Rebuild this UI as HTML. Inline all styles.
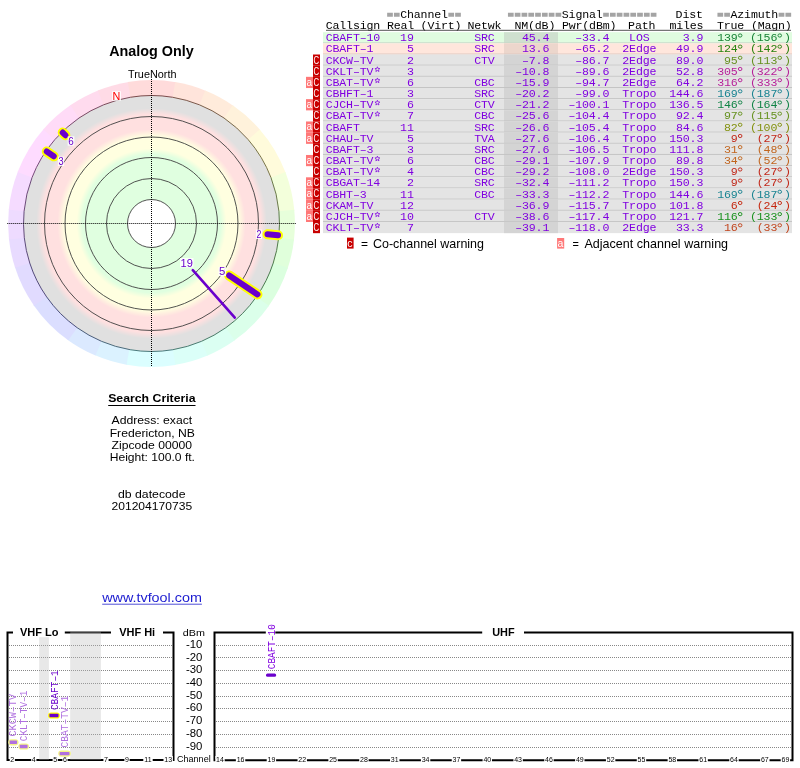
<!DOCTYPE html>
<html><head><meta charset="utf-8"><title>TV Fool</title>
<style>html,body{margin:0;padding:0;background:#fff;width:800px;height:768px;overflow:hidden}svg{display:block;will-change:transform}</style>
</head><body><svg width="800" height="768" viewBox="0 0 800 768">
<rect width="800" height="768" fill="#fff"/>
<path d="M151.5,223.5 L127.59,364.89 A143.4,143.4 0 0 1 94.55,355.11 Z" fill="#dbf2ff"/>
<path d="M151.5,223.5 L95.47,355.50 A143.4,143.4 0 0 1 67.41,339.66 Z" fill="#dbe9ff"/>
<path d="M151.5,223.5 L68.23,340.24 A143.4,143.4 0 0 1 33.46,304.93 Z" fill="#dbdeff"/>
<path d="M151.5,223.5 L34.03,305.75 A143.4,143.4 0 0 1 14.81,266.86 Z" fill="#e1dbff"/>
<path d="M151.5,223.5 L15.12,267.81 A143.4,143.4 0 0 1 8.89,238.49 Z" fill="#e8dbff"/>
<path d="M151.5,223.5 L8.99,239.48 A143.4,143.4 0 0 1 8.86,208.76 Z" fill="#eedbff"/>
<path d="M151.5,223.5 L8.76,209.76 A143.4,143.4 0 0 1 17.99,171.18 Z" fill="#f5dbff"/>
<path d="M151.5,223.5 L17.62,172.11 A143.4,143.4 0 0 1 43.93,128.67 Z" fill="#fedbff"/>
<path d="M151.5,223.5 L43.27,129.42 A143.4,143.4 0 0 1 71.10,104.76 Z" fill="#ffdbf7"/>
<path d="M151.5,223.5 L70.28,105.32 A143.4,143.4 0 0 1 98.71,90.17 Z" fill="#ffdbee"/>
<path d="M151.5,223.5 L97.78,90.54 A143.4,143.4 0 0 1 128.82,81.90 Z" fill="#ffdbe6"/>
<path d="M151.5,223.5 L127.83,82.07 A143.4,143.4 0 0 1 176.15,82.24 Z" fill="#ffdbdb"/>
<path d="M151.5,223.5 L175.17,82.07 A143.4,143.4 0 0 1 206.15,90.92 Z" fill="#ffe4db"/>
<path d="M151.5,223.5 L205.22,90.54 A143.4,143.4 0 0 1 233.55,105.89 Z" fill="#ffebdb"/>
<path d="M151.5,223.5 L232.72,105.32 A143.4,143.4 0 0 1 260.38,130.18 Z" fill="#fff2db"/>
<path d="M151.5,223.5 L259.73,129.42 A143.4,143.4 0 0 1 285.73,173.05 Z" fill="#fffbdb"/>
<path d="M151.5,223.5 L285.38,172.11 A143.4,143.4 0 0 1 294.33,210.75 Z" fill="#f3ffdb"/>
<path d="M151.5,223.5 L294.24,209.76 A143.4,143.4 0 0 1 293.89,240.48 Z" fill="#e7ffdb"/>
<path d="M151.5,223.5 L294.01,239.48 A143.4,143.4 0 0 1 287.57,268.76 Z" fill="#e0ffdb"/>
<path d="M151.5,223.5 L287.88,267.81 A143.4,143.4 0 0 1 268.39,306.57 Z" fill="#dbffdf"/>
<path d="M151.5,223.5 L268.97,305.75 A143.4,143.4 0 0 1 233.96,340.82 Z" fill="#dbffea"/>
<path d="M151.5,223.5 L234.77,340.24 A143.4,143.4 0 0 1 206.61,355.89 Z" fill="#dbfff2"/>
<path d="M151.5,223.5 L207.53,355.50 A143.4,143.4 0 0 1 174.43,365.06 Z" fill="#dbfff8"/>
<path d="M151.5,223.5 L175.41,364.89 A143.4,143.4 0 0 1 126.60,364.72 Z" fill="#dbfeff"/>
<defs><radialGradient id="rg" gradientUnits="userSpaceOnUse" cx="151.5" cy="223.5" r="128"><stop offset="0" stop-color="#e0ffe0"/><stop offset="0.54" stop-color="#e0ffe0"/><stop offset="0.585" stop-color="#ffffe0"/><stop offset="0.68" stop-color="#ffffe0"/><stop offset="0.735" stop-color="#ffe0e0"/><stop offset="0.852" stop-color="#ffe0e0"/><stop offset="0.9" stop-color="#e0e0e0"/><stop offset="1" stop-color="#e0e0e0"/></radialGradient></defs>
<circle cx="151.5" cy="223.5" r="128" fill="url(#rg)"/>
<circle cx="151.5" cy="223.5" r="24" fill="#fff"/>
<circle cx="151.5" cy="223.5" r="24" fill="none" stroke="#404040" stroke-width="0.9"/>
<circle cx="151.5" cy="223.5" r="45" fill="none" stroke="#404040" stroke-width="0.9"/>
<circle cx="151.5" cy="223.5" r="66" fill="none" stroke="#404040" stroke-width="0.9"/>
<circle cx="151.5" cy="223.5" r="86.5" fill="none" stroke="#404040" stroke-width="0.9"/>
<circle cx="151.5" cy="223.5" r="107" fill="none" stroke="#404040" stroke-width="0.9"/>
<path d="M130.15,349.71 A128,128 0 0 1 101.49,341.32" fill="none" stroke="#3a5b6d" stroke-width="0.9"/>
<path d="M101.49,341.32 A128,128 0 0 1 77.17,327.71" fill="none" stroke="#3a4e6d" stroke-width="0.9"/>
<path d="M77.17,327.71 A128,128 0 0 1 46.65,296.92" fill="none" stroke="#3a3e6d" stroke-width="0.9"/>
<path d="M46.65,296.92 A128,128 0 0 1 29.76,263.05" fill="none" stroke="#433a6d" stroke-width="0.9"/>
<path d="M29.76,263.05 A128,128 0 0 1 24.30,237.77" fill="none" stroke="#4d3a6d" stroke-width="0.9"/>
<path d="M24.30,237.77 A128,128 0 0 1 24.09,211.23" fill="none" stroke="#553a6d" stroke-width="0.9"/>
<path d="M24.09,211.23 A128,128 0 0 1 32.00,177.63" fill="none" stroke="#5f3a6d" stroke-width="0.9"/>
<path d="M32.00,177.63 A128,128 0 0 1 54.90,139.52" fill="none" stroke="#6b3a6d" stroke-width="0.9"/>
<path d="M54.90,139.52 A128,128 0 0 1 79.00,118.01" fill="none" stroke="#6d3a61" stroke-width="0.9"/>
<path d="M79.00,118.01 A128,128 0 0 1 103.55,104.82" fill="none" stroke="#6d3a55" stroke-width="0.9"/>
<path d="M103.55,104.82 A128,128 0 0 1 130.37,97.26" fill="none" stroke="#6d3a49" stroke-width="0.9"/>
<path d="M130.37,97.26 A128,128 0 0 1 172.63,97.26" fill="none" stroke="#6d3a3a" stroke-width="0.9"/>
<path d="M172.63,97.26 A128,128 0 0 1 199.45,104.82" fill="none" stroke="#6d473a" stroke-width="0.9"/>
<path d="M199.45,104.82 A128,128 0 0 1 224.00,118.01" fill="none" stroke="#6d503a" stroke-width="0.9"/>
<path d="M224.00,118.01 A128,128 0 0 1 248.10,139.52" fill="none" stroke="#6d5b3a" stroke-width="0.9"/>
<path d="M248.10,139.52 A128,128 0 0 1 271.00,177.63" fill="none" stroke="#6d683a" stroke-width="0.9"/>
<path d="M271.00,177.63 A128,128 0 0 1 278.91,211.23" fill="none" stroke="#5c6d3a" stroke-width="0.9"/>
<path d="M278.91,211.23 A128,128 0 0 1 278.70,237.77" fill="none" stroke="#4b6d3a" stroke-width="0.9"/>
<path d="M278.70,237.77 A128,128 0 0 1 273.24,263.05" fill="none" stroke="#416d3a" stroke-width="0.9"/>
<path d="M273.24,263.05 A128,128 0 0 1 256.35,296.92" fill="none" stroke="#3a6d40" stroke-width="0.9"/>
<path d="M256.35,296.92 A128,128 0 0 1 225.83,327.71" fill="none" stroke="#3a6d4f" stroke-width="0.9"/>
<path d="M225.83,327.71 A128,128 0 0 1 201.51,341.32" fill="none" stroke="#3a6d5a" stroke-width="0.9"/>
<path d="M201.51,341.32 A128,128 0 0 1 172.85,349.71" fill="none" stroke="#3a6d63" stroke-width="0.9"/>
<path d="M172.85,349.71 A128,128 0 0 1 130.15,349.71" fill="none" stroke="#3a6b6d" stroke-width="0.9"/>
<line x1="7.3" y1="223.5" x2="296" y2="223.5" stroke="#000" stroke-width="1" stroke-dasharray="1,1"/>
<line x1="151.5" y1="79" x2="151.5" y2="366.8" stroke="#000" stroke-width="1" stroke-dasharray="1,1"/>
<line x1="192.78" y1="270.16" x2="234.79" y2="317.64" stroke="#6a00cc" stroke-width="2.6" stroke-linecap="round"/>
<line x1="229.20" y1="275.51" x2="257.45" y2="294.43" stroke="#ffff00" stroke-width="10" stroke-linecap="round"/>
<line x1="229.20" y1="275.51" x2="257.45" y2="294.43" stroke="#6a00cc" stroke-width="6" stroke-linecap="round"/>
<line x1="267.50" y1="234.26" x2="278.06" y2="235.24" stroke="#ffff00" stroke-width="10" stroke-linecap="round"/>
<line x1="267.50" y1="234.26" x2="278.06" y2="235.24" stroke="#6a00cc" stroke-width="6" stroke-linecap="round"/>
<line x1="65.39" y1="135.26" x2="62.73" y2="132.54" stroke="#ffff00" stroke-width="10" stroke-linecap="round"/>
<line x1="65.39" y1="135.26" x2="62.73" y2="132.54" stroke="#6a00cc" stroke-width="6" stroke-linecap="round"/>
<line x1="53.76" y1="156.32" x2="46.75" y2="151.51" stroke="#ffff00" stroke-width="10" stroke-linecap="round"/>
<line x1="53.76" y1="156.32" x2="46.75" y2="151.51" stroke="#6a00cc" stroke-width="6" stroke-linecap="round"/>
<rect x="180.00" y="258.00" width="13.50" height="9.50" fill="#fff" opacity="0.85"/>
<text x="180.60" y="266.50" font-family="Liberation Sans" font-size="11.52" fill="#6a00cc" text-anchor="start" textLength="12.3" lengthAdjust="spacingAndGlyphs" >19</text>
<rect x="218.50" y="267.00" width="7.50" height="9.00" fill="#fff" opacity="0.85"/>
<text x="219.10" y="275.00" font-family="Liberation Sans" font-size="10.75" fill="#6a00cc" text-anchor="start" textLength="6.3" lengthAdjust="spacingAndGlyphs" >5</text>
<rect x="255.90" y="229.60" width="6.10" height="9.40" fill="#fff" opacity="0.85"/>
<text x="256.50" y="238.00" font-family="Liberation Sans" font-size="11.37" fill="#6a00cc" text-anchor="start" textLength="4.9" lengthAdjust="spacingAndGlyphs" >2</text>
<rect x="67.70" y="136.30" width="6.70" height="9.40" fill="#fff" opacity="0.85"/>
<text x="68.30" y="144.70" font-family="Liberation Sans" font-size="11.37" fill="#6a00cc" text-anchor="start" textLength="5.5" lengthAdjust="spacingAndGlyphs" >6</text>
<rect x="57.90" y="156.60" width="6.30" height="9.40" fill="#fff" opacity="0.85"/>
<text x="58.50" y="165.00" font-family="Liberation Sans" font-size="11.37" fill="#6a00cc" text-anchor="start" textLength="5.1" lengthAdjust="spacingAndGlyphs" >3</text>
<rect x="112.00" y="91.25" width="9.00" height="9.50" fill="#fff" opacity="0.85"/>
<text x="112.60" y="99.75" font-family="Liberation Sans" font-size="11.52" fill="#ff0000" text-anchor="start" textLength="7.8" lengthAdjust="spacingAndGlyphs" >N</text>
<text x="109.20" y="55.60" font-family="Liberation Sans" font-size="14" font-weight="bold" fill="#000" text-anchor="start" textLength="84.6" lengthAdjust="spacingAndGlyphs" >Analog Only</text>
<text x="128.00" y="77.75" font-family="Liberation Sans" font-size="10" fill="#000" text-anchor="start" textLength="48.5" lengthAdjust="spacingAndGlyphs" >TrueNorth</text>
<text x="108.20" y="401.90" font-family="Liberation Sans" font-size="10.8" font-weight="bold" fill="#000" text-anchor="start" textLength="87.3" lengthAdjust="spacingAndGlyphs" >Search Criteria</text>
<rect x="108.2" y="405" width="87.3" height="1" fill="#000"/>
<text x="111.50" y="423.80" font-family="Liberation Sans" font-size="10.8" fill="#000" text-anchor="start" textLength="80.7" lengthAdjust="spacingAndGlyphs" >Address: exact</text>
<text x="109.70" y="436.60" font-family="Liberation Sans" font-size="10.8" fill="#000" text-anchor="start" textLength="85.2" lengthAdjust="spacingAndGlyphs" >Fredericton, NB</text>
<text x="111.50" y="449.00" font-family="Liberation Sans" font-size="10.8" fill="#000" text-anchor="start" textLength="80.5" lengthAdjust="spacingAndGlyphs" >Zipcode 00000</text>
<text x="109.70" y="461.00" font-family="Liberation Sans" font-size="10.8" fill="#000" text-anchor="start" textLength="85.3" lengthAdjust="spacingAndGlyphs" >Height: 100.0 ft.</text>
<text x="118.00" y="497.70" font-family="Liberation Sans" font-size="10.8" fill="#000" text-anchor="start" textLength="67.5" lengthAdjust="spacingAndGlyphs" >db datecode</text>
<text x="111.50" y="509.60" font-family="Liberation Sans" font-size="10.8" fill="#000" text-anchor="start" textLength="80.6" lengthAdjust="spacingAndGlyphs" >201204170735</text>
<text x="102.20" y="602.00" font-family="Liberation Sans" font-size="12.4" fill="#1c1cd0" text-anchor="start" textLength="99.7" lengthAdjust="spacingAndGlyphs" >www.tvfool.com</text>
<rect x="102.2" y="603.7" width="99.7" height="1" fill="#5050d8"/>
<rect x="323" y="32.17" width="469" height="11.16" fill="#e0fce0"/>
<rect x="504" y="32.17" width="54" height="11.16" fill="#cfe0cf"/>
<rect x="323" y="42.33" width="469" height="1" fill="#c8d8c8"/>
<rect x="323" y="43.33" width="469" height="11.16" fill="#ffe6dc"/>
<rect x="504" y="43.33" width="54" height="11.16" fill="#ecd6cc"/>
<rect x="323" y="53.50" width="469" height="1" fill="#e0c8c0"/>
<rect x="323" y="54.50" width="469" height="11.16" fill="#e4e4e4"/>
<rect x="504" y="54.50" width="54" height="11.16" fill="#d4d4d4"/>
<rect x="323" y="64.66" width="469" height="1" fill="#c4c4c4"/>
<rect x="313" y="54.50" width="7" height="11.21" fill="#c80000"/>
<text x="313.6" y="63.50" font-family="Liberation Sans" font-size="10.2" fill="#fff" textLength="5.6" lengthAdjust="spacingAndGlyphs">C</text>
<rect x="323" y="65.66" width="469" height="11.16" fill="#e4e4e4"/>
<rect x="504" y="65.66" width="54" height="11.16" fill="#d4d4d4"/>
<rect x="323" y="75.83" width="469" height="1" fill="#c4c4c4"/>
<rect x="313" y="65.66" width="7" height="11.21" fill="#c80000"/>
<text x="313.6" y="74.66" font-family="Liberation Sans" font-size="10.2" fill="#fff" textLength="5.6" lengthAdjust="spacingAndGlyphs">C</text>
<rect x="323" y="76.83" width="469" height="11.16" fill="#e4e4e4"/>
<rect x="504" y="76.83" width="54" height="11.16" fill="#d4d4d4"/>
<rect x="323" y="86.99" width="469" height="1" fill="#c4c4c4"/>
<rect x="313" y="76.83" width="7" height="11.21" fill="#c80000"/>
<text x="313.6" y="85.83" font-family="Liberation Sans" font-size="10.2" fill="#fff" textLength="5.6" lengthAdjust="spacingAndGlyphs">C</text>
<rect x="306" y="76.83" width="7" height="11.21" fill="#ff7878"/>
<text x="306.6" y="85.83" font-family="Liberation Sans" font-size="10.5" fill="#fff" textLength="5.6" lengthAdjust="spacingAndGlyphs">a</text>
<rect x="323" y="87.99" width="469" height="11.16" fill="#e4e4e4"/>
<rect x="504" y="87.99" width="54" height="11.16" fill="#d4d4d4"/>
<rect x="323" y="98.15" width="469" height="1" fill="#c4c4c4"/>
<rect x="313" y="87.99" width="7" height="11.21" fill="#c80000"/>
<text x="313.6" y="96.99" font-family="Liberation Sans" font-size="10.2" fill="#fff" textLength="5.6" lengthAdjust="spacingAndGlyphs">C</text>
<rect x="323" y="99.15" width="469" height="11.16" fill="#e4e4e4"/>
<rect x="504" y="99.15" width="54" height="11.16" fill="#d4d4d4"/>
<rect x="323" y="109.32" width="469" height="1" fill="#c4c4c4"/>
<rect x="313" y="99.15" width="7" height="11.21" fill="#c80000"/>
<text x="313.6" y="108.15" font-family="Liberation Sans" font-size="10.2" fill="#fff" textLength="5.6" lengthAdjust="spacingAndGlyphs">C</text>
<rect x="306" y="99.15" width="7" height="11.21" fill="#ff7878"/>
<text x="306.6" y="108.15" font-family="Liberation Sans" font-size="10.5" fill="#fff" textLength="5.6" lengthAdjust="spacingAndGlyphs">a</text>
<rect x="323" y="110.32" width="469" height="11.16" fill="#e4e4e4"/>
<rect x="504" y="110.32" width="54" height="11.16" fill="#d4d4d4"/>
<rect x="323" y="120.48" width="469" height="1" fill="#c4c4c4"/>
<rect x="313" y="110.32" width="7" height="11.21" fill="#c80000"/>
<text x="313.6" y="119.32" font-family="Liberation Sans" font-size="10.2" fill="#fff" textLength="5.6" lengthAdjust="spacingAndGlyphs">C</text>
<rect x="323" y="121.48" width="469" height="11.16" fill="#e4e4e4"/>
<rect x="504" y="121.48" width="54" height="11.16" fill="#d4d4d4"/>
<rect x="323" y="131.65" width="469" height="1" fill="#c4c4c4"/>
<rect x="313" y="121.48" width="7" height="11.21" fill="#c80000"/>
<text x="313.6" y="130.48" font-family="Liberation Sans" font-size="10.2" fill="#fff" textLength="5.6" lengthAdjust="spacingAndGlyphs">C</text>
<rect x="306" y="121.48" width="7" height="11.21" fill="#ff7878"/>
<text x="306.6" y="130.48" font-family="Liberation Sans" font-size="10.5" fill="#fff" textLength="5.6" lengthAdjust="spacingAndGlyphs">a</text>
<rect x="323" y="132.65" width="469" height="11.16" fill="#e4e4e4"/>
<rect x="504" y="132.65" width="54" height="11.16" fill="#d4d4d4"/>
<rect x="323" y="142.81" width="469" height="1" fill="#c4c4c4"/>
<rect x="313" y="132.65" width="7" height="11.21" fill="#c80000"/>
<text x="313.6" y="141.65" font-family="Liberation Sans" font-size="10.2" fill="#fff" textLength="5.6" lengthAdjust="spacingAndGlyphs">C</text>
<rect x="306" y="132.65" width="7" height="11.21" fill="#ff7878"/>
<text x="306.6" y="141.65" font-family="Liberation Sans" font-size="10.5" fill="#fff" textLength="5.6" lengthAdjust="spacingAndGlyphs">a</text>
<rect x="323" y="143.81" width="469" height="11.16" fill="#e4e4e4"/>
<rect x="504" y="143.81" width="54" height="11.16" fill="#d4d4d4"/>
<rect x="323" y="153.97" width="469" height="1" fill="#c4c4c4"/>
<rect x="313" y="143.81" width="7" height="11.21" fill="#c80000"/>
<text x="313.6" y="152.81" font-family="Liberation Sans" font-size="10.2" fill="#fff" textLength="5.6" lengthAdjust="spacingAndGlyphs">C</text>
<rect x="323" y="154.97" width="469" height="11.16" fill="#e4e4e4"/>
<rect x="504" y="154.97" width="54" height="11.16" fill="#d4d4d4"/>
<rect x="323" y="165.14" width="469" height="1" fill="#c4c4c4"/>
<rect x="313" y="154.97" width="7" height="11.21" fill="#c80000"/>
<text x="313.6" y="163.97" font-family="Liberation Sans" font-size="10.2" fill="#fff" textLength="5.6" lengthAdjust="spacingAndGlyphs">C</text>
<rect x="306" y="154.97" width="7" height="11.21" fill="#ff7878"/>
<text x="306.6" y="163.97" font-family="Liberation Sans" font-size="10.5" fill="#fff" textLength="5.6" lengthAdjust="spacingAndGlyphs">a</text>
<rect x="323" y="166.14" width="469" height="11.16" fill="#e4e4e4"/>
<rect x="504" y="166.14" width="54" height="11.16" fill="#d4d4d4"/>
<rect x="323" y="176.30" width="469" height="1" fill="#c4c4c4"/>
<rect x="313" y="166.14" width="7" height="11.21" fill="#c80000"/>
<text x="313.6" y="175.14" font-family="Liberation Sans" font-size="10.2" fill="#fff" textLength="5.6" lengthAdjust="spacingAndGlyphs">C</text>
<rect x="323" y="177.30" width="469" height="11.16" fill="#e4e4e4"/>
<rect x="504" y="177.30" width="54" height="11.16" fill="#d4d4d4"/>
<rect x="323" y="187.47" width="469" height="1" fill="#c4c4c4"/>
<rect x="313" y="177.30" width="7" height="11.21" fill="#c80000"/>
<text x="313.6" y="186.30" font-family="Liberation Sans" font-size="10.2" fill="#fff" textLength="5.6" lengthAdjust="spacingAndGlyphs">C</text>
<rect x="306" y="177.30" width="7" height="11.21" fill="#ff7878"/>
<text x="306.6" y="186.30" font-family="Liberation Sans" font-size="10.5" fill="#fff" textLength="5.6" lengthAdjust="spacingAndGlyphs">a</text>
<rect x="323" y="188.47" width="469" height="11.16" fill="#e4e4e4"/>
<rect x="504" y="188.47" width="54" height="11.16" fill="#d4d4d4"/>
<rect x="323" y="198.63" width="469" height="1" fill="#c4c4c4"/>
<rect x="313" y="188.47" width="7" height="11.21" fill="#c80000"/>
<text x="313.6" y="197.47" font-family="Liberation Sans" font-size="10.2" fill="#fff" textLength="5.6" lengthAdjust="spacingAndGlyphs">C</text>
<rect x="306" y="188.47" width="7" height="11.21" fill="#ff7878"/>
<text x="306.6" y="197.47" font-family="Liberation Sans" font-size="10.5" fill="#fff" textLength="5.6" lengthAdjust="spacingAndGlyphs">a</text>
<rect x="323" y="199.63" width="469" height="11.16" fill="#e4e4e4"/>
<rect x="504" y="199.63" width="54" height="11.16" fill="#d4d4d4"/>
<rect x="323" y="209.79" width="469" height="1" fill="#c4c4c4"/>
<rect x="313" y="199.63" width="7" height="11.21" fill="#c80000"/>
<text x="313.6" y="208.63" font-family="Liberation Sans" font-size="10.2" fill="#fff" textLength="5.6" lengthAdjust="spacingAndGlyphs">C</text>
<rect x="306" y="199.63" width="7" height="11.21" fill="#ff7878"/>
<text x="306.6" y="208.63" font-family="Liberation Sans" font-size="10.5" fill="#fff" textLength="5.6" lengthAdjust="spacingAndGlyphs">a</text>
<rect x="323" y="210.79" width="469" height="11.16" fill="#e4e4e4"/>
<rect x="504" y="210.79" width="54" height="11.16" fill="#d4d4d4"/>
<rect x="323" y="220.96" width="469" height="1" fill="#c4c4c4"/>
<rect x="313" y="210.79" width="7" height="11.21" fill="#c80000"/>
<text x="313.6" y="219.79" font-family="Liberation Sans" font-size="10.2" fill="#fff" textLength="5.6" lengthAdjust="spacingAndGlyphs">C</text>
<rect x="306" y="210.79" width="7" height="11.21" fill="#ff7878"/>
<text x="306.6" y="219.79" font-family="Liberation Sans" font-size="10.5" fill="#fff" textLength="5.6" lengthAdjust="spacingAndGlyphs">a</text>
<rect x="323" y="221.96" width="469" height="11.16" fill="#e4e4e4"/>
<rect x="504" y="221.96" width="54" height="11.16" fill="#d4d4d4"/>
<rect x="313" y="221.96" width="7" height="11.21" fill="#c80000"/>
<text x="313.6" y="230.96" font-family="Liberation Sans" font-size="10.2" fill="#fff" textLength="5.6" lengthAdjust="spacingAndGlyphs">C</text>
<text x="325.70" y="41.30" font-family="Liberation Mono" font-size="11.6" letter-spacing="-0.160" fill="#8000e0" >CBAFT–10</text>
<text x="400.10" y="41.30" font-family="Liberation Mono" font-size="11.6" letter-spacing="-0.160" fill="#8000e0" >19</text>
<text x="474.20" y="41.30" font-family="Liberation Mono" font-size="11.6" letter-spacing="-0.160" fill="#8000e0" >SRC</text>
<text x="522.00" y="41.30" font-family="Liberation Mono" font-size="11.6" letter-spacing="-0.160" fill="#8000e0" >45.4</text>
<text x="575.20" y="41.30" font-family="Liberation Mono" font-size="11.6" letter-spacing="-0.160" fill="#8000e0" >–33.4</text>
<text x="629.10" y="41.30" font-family="Liberation Mono" font-size="11.6" letter-spacing="-0.160" fill="#8000e0" >LOS</text>
<text x="682.80" y="41.30" font-family="Liberation Mono" font-size="11.6" letter-spacing="-0.160" fill="#8000e0" >3.9</text>
<text x="717.20" y="41.30" font-family="Liberation Mono" font-size="11.6" letter-spacing="-0.160" fill="#198337" >139 </text>
<text x="750.00" y="41.30" font-family="Liberation Mono" font-size="11.6" letter-spacing="-0.160" fill="#198337" >(156 )</text>
<ellipse cx="740.15" cy="35.50" rx="1.8" ry="1.6" fill="none" stroke="#198337" stroke-width="0.95"/>
<ellipse cx="779.75" cy="35.50" rx="1.8" ry="1.6" fill="none" stroke="#198337" stroke-width="0.95"/>
<text x="325.70" y="52.46" font-family="Liberation Mono" font-size="11.6" letter-spacing="-0.160" fill="#8000e0" >CBAFT–1</text>
<text x="406.90" y="52.46" font-family="Liberation Mono" font-size="11.6" letter-spacing="-0.160" fill="#8000e0" >5</text>
<text x="474.20" y="52.46" font-family="Liberation Mono" font-size="11.6" letter-spacing="-0.160" fill="#8000e0" >SRC</text>
<text x="522.00" y="52.46" font-family="Liberation Mono" font-size="11.6" letter-spacing="-0.160" fill="#8000e0" >13.6</text>
<text x="575.20" y="52.46" font-family="Liberation Mono" font-size="11.6" letter-spacing="-0.160" fill="#8000e0" >–65.2</text>
<text x="622.30" y="52.46" font-family="Liberation Mono" font-size="11.6" letter-spacing="-0.160" fill="#8000e0" >2Edge</text>
<text x="676.00" y="52.46" font-family="Liberation Mono" font-size="11.6" letter-spacing="-0.160" fill="#8000e0" >49.9</text>
<text x="717.20" y="52.46" font-family="Liberation Mono" font-size="11.6" letter-spacing="-0.160" fill="#27830f" >124 </text>
<text x="750.00" y="52.46" font-family="Liberation Mono" font-size="11.6" letter-spacing="-0.160" fill="#27830f" >(142 )</text>
<ellipse cx="740.15" cy="46.66" rx="1.8" ry="1.6" fill="none" stroke="#27830f" stroke-width="0.95"/>
<ellipse cx="779.75" cy="46.66" rx="1.8" ry="1.6" fill="none" stroke="#27830f" stroke-width="0.95"/>
<text x="325.70" y="63.63" font-family="Liberation Mono" font-size="11.6" letter-spacing="-0.160" fill="#8000e0" >CKCW–TV</text>
<text x="406.90" y="63.63" font-family="Liberation Mono" font-size="11.6" letter-spacing="-0.160" fill="#8000e0" >2</text>
<text x="474.20" y="63.63" font-family="Liberation Mono" font-size="11.6" letter-spacing="-0.160" fill="#8000e0" >CTV</text>
<text x="522.00" y="63.63" font-family="Liberation Mono" font-size="11.6" letter-spacing="-0.160" fill="#8000e0" >–7.8</text>
<text x="575.20" y="63.63" font-family="Liberation Mono" font-size="11.6" letter-spacing="-0.160" fill="#8000e0" >–86.7</text>
<text x="622.30" y="63.63" font-family="Liberation Mono" font-size="11.6" letter-spacing="-0.160" fill="#8000e0" >2Edge</text>
<text x="676.00" y="63.63" font-family="Liberation Mono" font-size="11.6" letter-spacing="-0.160" fill="#8000e0" >89.0</text>
<text x="724.00" y="63.63" font-family="Liberation Mono" font-size="11.6" letter-spacing="-0.160" fill="#65911e" >95 </text>
<text x="750.00" y="63.63" font-family="Liberation Mono" font-size="11.6" letter-spacing="-0.160" fill="#65911e" >(113 )</text>
<ellipse cx="740.15" cy="57.83" rx="1.8" ry="1.6" fill="none" stroke="#65911e" stroke-width="0.95"/>
<ellipse cx="779.75" cy="57.83" rx="1.8" ry="1.6" fill="none" stroke="#65911e" stroke-width="0.95"/>
<text x="325.70" y="74.79" font-family="Liberation Mono" font-size="11.6" letter-spacing="-0.160" fill="#8000e0" >CKLT–TV </text>
<polygon points="377.40,66.79 378.08,68.46 379.87,68.59 378.49,69.75 378.93,71.50 377.40,70.54 375.87,71.50 376.31,69.75 374.93,68.59 376.72,68.46" fill="none" stroke="#8000e0" stroke-width="0.75" stroke-linejoin="round"/>
<text x="406.90" y="74.79" font-family="Liberation Mono" font-size="11.6" letter-spacing="-0.160" fill="#8000e0" >3</text>
<text x="484.40" y="74.79" font-family="Liberation Mono" font-size="11.6" letter-spacing="-0.160" fill="#8000e0" ></text>
<text x="515.20" y="74.79" font-family="Liberation Mono" font-size="11.6" letter-spacing="-0.160" fill="#8000e0" >–10.8</text>
<text x="575.20" y="74.79" font-family="Liberation Mono" font-size="11.6" letter-spacing="-0.160" fill="#8000e0" >–89.6</text>
<text x="622.30" y="74.79" font-family="Liberation Mono" font-size="11.6" letter-spacing="-0.160" fill="#8000e0" >2Edge</text>
<text x="676.00" y="74.79" font-family="Liberation Mono" font-size="11.6" letter-spacing="-0.160" fill="#8000e0" >52.8</text>
<text x="717.20" y="74.79" font-family="Liberation Mono" font-size="11.6" letter-spacing="-0.160" fill="#b61e98" >305 </text>
<text x="750.00" y="74.79" font-family="Liberation Mono" font-size="11.6" letter-spacing="-0.160" fill="#b61e98" >(322 )</text>
<ellipse cx="740.15" cy="68.99" rx="1.8" ry="1.6" fill="none" stroke="#b61e98" stroke-width="0.95"/>
<ellipse cx="779.75" cy="68.99" rx="1.8" ry="1.6" fill="none" stroke="#b61e98" stroke-width="0.95"/>
<text x="325.70" y="85.96" font-family="Liberation Mono" font-size="11.6" letter-spacing="-0.160" fill="#8000e0" >CBAT–TV </text>
<polygon points="377.40,77.96 378.08,79.63 379.87,79.75 378.49,80.91 378.93,82.66 377.40,81.71 375.87,82.66 376.31,80.91 374.93,79.75 376.72,79.63" fill="none" stroke="#8000e0" stroke-width="0.75" stroke-linejoin="round"/>
<text x="406.90" y="85.96" font-family="Liberation Mono" font-size="11.6" letter-spacing="-0.160" fill="#8000e0" >6</text>
<text x="474.20" y="85.96" font-family="Liberation Mono" font-size="11.6" letter-spacing="-0.160" fill="#8000e0" >CBC</text>
<text x="515.20" y="85.96" font-family="Liberation Mono" font-size="11.6" letter-spacing="-0.160" fill="#8000e0" >–15.9</text>
<text x="575.20" y="85.96" font-family="Liberation Mono" font-size="11.6" letter-spacing="-0.160" fill="#8000e0" >–94.7</text>
<text x="622.30" y="85.96" font-family="Liberation Mono" font-size="11.6" letter-spacing="-0.160" fill="#8000e0" >2Edge</text>
<text x="676.00" y="85.96" font-family="Liberation Mono" font-size="11.6" letter-spacing="-0.160" fill="#8000e0" >64.2</text>
<text x="717.20" y="85.96" font-family="Liberation Mono" font-size="11.6" letter-spacing="-0.160" fill="#b61e98" >316 </text>
<text x="750.00" y="85.96" font-family="Liberation Mono" font-size="11.6" letter-spacing="-0.160" fill="#b61e98" >(333 )</text>
<ellipse cx="740.15" cy="80.16" rx="1.8" ry="1.6" fill="none" stroke="#b61e98" stroke-width="0.95"/>
<ellipse cx="779.75" cy="80.16" rx="1.8" ry="1.6" fill="none" stroke="#b61e98" stroke-width="0.95"/>
<text x="325.70" y="97.12" font-family="Liberation Mono" font-size="11.6" letter-spacing="-0.160" fill="#8000e0" >CBHFT–1</text>
<text x="406.90" y="97.12" font-family="Liberation Mono" font-size="11.6" letter-spacing="-0.160" fill="#8000e0" >3</text>
<text x="474.20" y="97.12" font-family="Liberation Mono" font-size="11.6" letter-spacing="-0.160" fill="#8000e0" >SRC</text>
<text x="515.20" y="97.12" font-family="Liberation Mono" font-size="11.6" letter-spacing="-0.160" fill="#8000e0" >–20.2</text>
<text x="575.20" y="97.12" font-family="Liberation Mono" font-size="11.6" letter-spacing="-0.160" fill="#8000e0" >–99.0</text>
<text x="622.30" y="97.12" font-family="Liberation Mono" font-size="11.6" letter-spacing="-0.160" fill="#8000e0" >Tropo</text>
<text x="669.20" y="97.12" font-family="Liberation Mono" font-size="11.6" letter-spacing="-0.160" fill="#8000e0" >144.6</text>
<text x="717.20" y="97.12" font-family="Liberation Mono" font-size="11.6" letter-spacing="-0.160" fill="#198391" >169 </text>
<text x="750.00" y="97.12" font-family="Liberation Mono" font-size="11.6" letter-spacing="-0.160" fill="#198391" >(187 )</text>
<ellipse cx="740.15" cy="91.32" rx="1.8" ry="1.6" fill="none" stroke="#198391" stroke-width="0.95"/>
<ellipse cx="779.75" cy="91.32" rx="1.8" ry="1.6" fill="none" stroke="#198391" stroke-width="0.95"/>
<text x="325.70" y="108.28" font-family="Liberation Mono" font-size="11.6" letter-spacing="-0.160" fill="#8000e0" >CJCH–TV </text>
<polygon points="377.40,100.28 378.08,101.95 379.87,102.08 378.49,103.24 378.93,104.99 377.40,104.03 375.87,104.99 376.31,103.24 374.93,102.08 376.72,101.95" fill="none" stroke="#8000e0" stroke-width="0.75" stroke-linejoin="round"/>
<text x="406.90" y="108.28" font-family="Liberation Mono" font-size="11.6" letter-spacing="-0.160" fill="#8000e0" >6</text>
<text x="474.20" y="108.28" font-family="Liberation Mono" font-size="11.6" letter-spacing="-0.160" fill="#8000e0" >CTV</text>
<text x="515.20" y="108.28" font-family="Liberation Mono" font-size="11.6" letter-spacing="-0.160" fill="#8000e0" >–21.2</text>
<text x="568.40" y="108.28" font-family="Liberation Mono" font-size="11.6" letter-spacing="-0.160" fill="#8000e0" >–100.1</text>
<text x="622.30" y="108.28" font-family="Liberation Mono" font-size="11.6" letter-spacing="-0.160" fill="#8000e0" >Tropo</text>
<text x="669.20" y="108.28" font-family="Liberation Mono" font-size="11.6" letter-spacing="-0.160" fill="#8000e0" >136.5</text>
<text x="717.20" y="108.28" font-family="Liberation Mono" font-size="11.6" letter-spacing="-0.160" fill="#0f8345" >146 </text>
<text x="750.00" y="108.28" font-family="Liberation Mono" font-size="11.6" letter-spacing="-0.160" fill="#0f8345" >(164 )</text>
<ellipse cx="740.15" cy="102.48" rx="1.8" ry="1.6" fill="none" stroke="#0f8345" stroke-width="0.95"/>
<ellipse cx="779.75" cy="102.48" rx="1.8" ry="1.6" fill="none" stroke="#0f8345" stroke-width="0.95"/>
<text x="325.70" y="119.45" font-family="Liberation Mono" font-size="11.6" letter-spacing="-0.160" fill="#8000e0" >CBAT–TV </text>
<polygon points="377.40,111.45 378.08,113.12 379.87,113.24 378.49,114.40 378.93,116.15 377.40,115.20 375.87,116.15 376.31,114.40 374.93,113.24 376.72,113.12" fill="none" stroke="#8000e0" stroke-width="0.75" stroke-linejoin="round"/>
<text x="406.90" y="119.45" font-family="Liberation Mono" font-size="11.6" letter-spacing="-0.160" fill="#8000e0" >7</text>
<text x="474.20" y="119.45" font-family="Liberation Mono" font-size="11.6" letter-spacing="-0.160" fill="#8000e0" >CBC</text>
<text x="515.20" y="119.45" font-family="Liberation Mono" font-size="11.6" letter-spacing="-0.160" fill="#8000e0" >–25.6</text>
<text x="568.40" y="119.45" font-family="Liberation Mono" font-size="11.6" letter-spacing="-0.160" fill="#8000e0" >–104.4</text>
<text x="622.30" y="119.45" font-family="Liberation Mono" font-size="11.6" letter-spacing="-0.160" fill="#8000e0" >Tropo</text>
<text x="676.00" y="119.45" font-family="Liberation Mono" font-size="11.6" letter-spacing="-0.160" fill="#8000e0" >92.4</text>
<text x="724.00" y="119.45" font-family="Liberation Mono" font-size="11.6" letter-spacing="-0.160" fill="#65911e" >97 </text>
<text x="750.00" y="119.45" font-family="Liberation Mono" font-size="11.6" letter-spacing="-0.160" fill="#65911e" >(115 )</text>
<ellipse cx="740.15" cy="113.65" rx="1.8" ry="1.6" fill="none" stroke="#65911e" stroke-width="0.95"/>
<ellipse cx="779.75" cy="113.65" rx="1.8" ry="1.6" fill="none" stroke="#65911e" stroke-width="0.95"/>
<text x="325.70" y="130.61" font-family="Liberation Mono" font-size="11.6" letter-spacing="-0.160" fill="#8000e0" >CBAFT</text>
<text x="400.10" y="130.61" font-family="Liberation Mono" font-size="11.6" letter-spacing="-0.160" fill="#8000e0" >11</text>
<text x="474.20" y="130.61" font-family="Liberation Mono" font-size="11.6" letter-spacing="-0.160" fill="#8000e0" >SRC</text>
<text x="515.20" y="130.61" font-family="Liberation Mono" font-size="11.6" letter-spacing="-0.160" fill="#8000e0" >–26.6</text>
<text x="568.40" y="130.61" font-family="Liberation Mono" font-size="11.6" letter-spacing="-0.160" fill="#8000e0" >–105.4</text>
<text x="622.30" y="130.61" font-family="Liberation Mono" font-size="11.6" letter-spacing="-0.160" fill="#8000e0" >Tropo</text>
<text x="676.00" y="130.61" font-family="Liberation Mono" font-size="11.6" letter-spacing="-0.160" fill="#8000e0" >84.6</text>
<text x="724.00" y="130.61" font-family="Liberation Mono" font-size="11.6" letter-spacing="-0.160" fill="#83910f" >82 </text>
<text x="750.00" y="130.61" font-family="Liberation Mono" font-size="11.6" letter-spacing="-0.160" fill="#83910f" >(100 )</text>
<ellipse cx="740.15" cy="124.81" rx="1.8" ry="1.6" fill="none" stroke="#83910f" stroke-width="0.95"/>
<ellipse cx="779.75" cy="124.81" rx="1.8" ry="1.6" fill="none" stroke="#83910f" stroke-width="0.95"/>
<text x="325.70" y="141.78" font-family="Liberation Mono" font-size="11.6" letter-spacing="-0.160" fill="#8000e0" >CHAU–TV</text>
<text x="406.90" y="141.78" font-family="Liberation Mono" font-size="11.6" letter-spacing="-0.160" fill="#8000e0" >5</text>
<text x="474.20" y="141.78" font-family="Liberation Mono" font-size="11.6" letter-spacing="-0.160" fill="#8000e0" >TVA</text>
<text x="515.20" y="141.78" font-family="Liberation Mono" font-size="11.6" letter-spacing="-0.160" fill="#8000e0" >–27.6</text>
<text x="568.40" y="141.78" font-family="Liberation Mono" font-size="11.6" letter-spacing="-0.160" fill="#8000e0" >–106.4</text>
<text x="622.30" y="141.78" font-family="Liberation Mono" font-size="11.6" letter-spacing="-0.160" fill="#8000e0" >Tropo</text>
<text x="669.20" y="141.78" font-family="Liberation Mono" font-size="11.6" letter-spacing="-0.160" fill="#8000e0" >150.3</text>
<text x="730.80" y="141.78" font-family="Liberation Mono" font-size="11.6" letter-spacing="-0.160" fill="#c12719" >9 </text>
<text x="756.80" y="141.78" font-family="Liberation Mono" font-size="11.6" letter-spacing="-0.160" fill="#c12719" >(27 )</text>
<ellipse cx="740.15" cy="135.98" rx="1.8" ry="1.6" fill="none" stroke="#c12719" stroke-width="0.95"/>
<ellipse cx="779.75" cy="135.98" rx="1.8" ry="1.6" fill="none" stroke="#c12719" stroke-width="0.95"/>
<text x="325.70" y="152.94" font-family="Liberation Mono" font-size="11.6" letter-spacing="-0.160" fill="#8000e0" >CBAFT–3</text>
<text x="406.90" y="152.94" font-family="Liberation Mono" font-size="11.6" letter-spacing="-0.160" fill="#8000e0" >3</text>
<text x="474.20" y="152.94" font-family="Liberation Mono" font-size="11.6" letter-spacing="-0.160" fill="#8000e0" >SRC</text>
<text x="515.20" y="152.94" font-family="Liberation Mono" font-size="11.6" letter-spacing="-0.160" fill="#8000e0" >–27.6</text>
<text x="568.40" y="152.94" font-family="Liberation Mono" font-size="11.6" letter-spacing="-0.160" fill="#8000e0" >–106.5</text>
<text x="622.30" y="152.94" font-family="Liberation Mono" font-size="11.6" letter-spacing="-0.160" fill="#8000e0" >Tropo</text>
<text x="669.20" y="152.94" font-family="Liberation Mono" font-size="11.6" letter-spacing="-0.160" fill="#8000e0" >111.8</text>
<text x="724.00" y="152.94" font-family="Liberation Mono" font-size="11.6" letter-spacing="-0.160" fill="#c1651e" >31 </text>
<text x="756.80" y="152.94" font-family="Liberation Mono" font-size="11.6" letter-spacing="-0.160" fill="#c1651e" >(48 )</text>
<ellipse cx="740.15" cy="147.14" rx="1.8" ry="1.6" fill="none" stroke="#c1651e" stroke-width="0.95"/>
<ellipse cx="779.75" cy="147.14" rx="1.8" ry="1.6" fill="none" stroke="#c1651e" stroke-width="0.95"/>
<text x="325.70" y="164.10" font-family="Liberation Mono" font-size="11.6" letter-spacing="-0.160" fill="#8000e0" >CBAT–TV </text>
<polygon points="377.40,156.10 378.08,157.77 379.87,157.90 378.49,159.06 378.93,160.81 377.40,159.85 375.87,160.81 376.31,159.06 374.93,157.90 376.72,157.77" fill="none" stroke="#8000e0" stroke-width="0.75" stroke-linejoin="round"/>
<text x="406.90" y="164.10" font-family="Liberation Mono" font-size="11.6" letter-spacing="-0.160" fill="#8000e0" >6</text>
<text x="474.20" y="164.10" font-family="Liberation Mono" font-size="11.6" letter-spacing="-0.160" fill="#8000e0" >CBC</text>
<text x="515.20" y="164.10" font-family="Liberation Mono" font-size="11.6" letter-spacing="-0.160" fill="#8000e0" >–29.1</text>
<text x="568.40" y="164.10" font-family="Liberation Mono" font-size="11.6" letter-spacing="-0.160" fill="#8000e0" >–107.9</text>
<text x="622.30" y="164.10" font-family="Liberation Mono" font-size="11.6" letter-spacing="-0.160" fill="#8000e0" >Tropo</text>
<text x="676.00" y="164.10" font-family="Liberation Mono" font-size="11.6" letter-spacing="-0.160" fill="#8000e0" >89.8</text>
<text x="724.00" y="164.10" font-family="Liberation Mono" font-size="11.6" letter-spacing="-0.160" fill="#c1651e" >34 </text>
<text x="756.80" y="164.10" font-family="Liberation Mono" font-size="11.6" letter-spacing="-0.160" fill="#c1651e" >(52 )</text>
<ellipse cx="740.15" cy="158.30" rx="1.8" ry="1.6" fill="none" stroke="#c1651e" stroke-width="0.95"/>
<ellipse cx="779.75" cy="158.30" rx="1.8" ry="1.6" fill="none" stroke="#c1651e" stroke-width="0.95"/>
<text x="325.70" y="175.27" font-family="Liberation Mono" font-size="11.6" letter-spacing="-0.160" fill="#8000e0" >CBAT–TV </text>
<polygon points="377.40,167.27 378.08,168.94 379.87,169.06 378.49,170.22 378.93,171.97 377.40,171.02 375.87,171.97 376.31,170.22 374.93,169.06 376.72,168.94" fill="none" stroke="#8000e0" stroke-width="0.75" stroke-linejoin="round"/>
<text x="406.90" y="175.27" font-family="Liberation Mono" font-size="11.6" letter-spacing="-0.160" fill="#8000e0" >4</text>
<text x="474.20" y="175.27" font-family="Liberation Mono" font-size="11.6" letter-spacing="-0.160" fill="#8000e0" >CBC</text>
<text x="515.20" y="175.27" font-family="Liberation Mono" font-size="11.6" letter-spacing="-0.160" fill="#8000e0" >–29.2</text>
<text x="568.40" y="175.27" font-family="Liberation Mono" font-size="11.6" letter-spacing="-0.160" fill="#8000e0" >–108.0</text>
<text x="622.30" y="175.27" font-family="Liberation Mono" font-size="11.6" letter-spacing="-0.160" fill="#8000e0" >2Edge</text>
<text x="669.20" y="175.27" font-family="Liberation Mono" font-size="11.6" letter-spacing="-0.160" fill="#8000e0" >150.3</text>
<text x="730.80" y="175.27" font-family="Liberation Mono" font-size="11.6" letter-spacing="-0.160" fill="#c12719" >9 </text>
<text x="756.80" y="175.27" font-family="Liberation Mono" font-size="11.6" letter-spacing="-0.160" fill="#c12719" >(27 )</text>
<ellipse cx="740.15" cy="169.47" rx="1.8" ry="1.6" fill="none" stroke="#c12719" stroke-width="0.95"/>
<ellipse cx="779.75" cy="169.47" rx="1.8" ry="1.6" fill="none" stroke="#c12719" stroke-width="0.95"/>
<text x="325.70" y="186.43" font-family="Liberation Mono" font-size="11.6" letter-spacing="-0.160" fill="#8000e0" >CBGAT–14</text>
<text x="406.90" y="186.43" font-family="Liberation Mono" font-size="11.6" letter-spacing="-0.160" fill="#8000e0" >2</text>
<text x="474.20" y="186.43" font-family="Liberation Mono" font-size="11.6" letter-spacing="-0.160" fill="#8000e0" >SRC</text>
<text x="515.20" y="186.43" font-family="Liberation Mono" font-size="11.6" letter-spacing="-0.160" fill="#8000e0" >–32.4</text>
<text x="568.40" y="186.43" font-family="Liberation Mono" font-size="11.6" letter-spacing="-0.160" fill="#8000e0" >–111.2</text>
<text x="622.30" y="186.43" font-family="Liberation Mono" font-size="11.6" letter-spacing="-0.160" fill="#8000e0" >Tropo</text>
<text x="669.20" y="186.43" font-family="Liberation Mono" font-size="11.6" letter-spacing="-0.160" fill="#8000e0" >150.3</text>
<text x="730.80" y="186.43" font-family="Liberation Mono" font-size="11.6" letter-spacing="-0.160" fill="#c12719" >9 </text>
<text x="756.80" y="186.43" font-family="Liberation Mono" font-size="11.6" letter-spacing="-0.160" fill="#c12719" >(27 )</text>
<ellipse cx="740.15" cy="180.63" rx="1.8" ry="1.6" fill="none" stroke="#c12719" stroke-width="0.95"/>
<ellipse cx="779.75" cy="180.63" rx="1.8" ry="1.6" fill="none" stroke="#c12719" stroke-width="0.95"/>
<text x="325.70" y="197.60" font-family="Liberation Mono" font-size="11.6" letter-spacing="-0.160" fill="#8000e0" >CBHT–3</text>
<text x="400.10" y="197.60" font-family="Liberation Mono" font-size="11.6" letter-spacing="-0.160" fill="#8000e0" >11</text>
<text x="474.20" y="197.60" font-family="Liberation Mono" font-size="11.6" letter-spacing="-0.160" fill="#8000e0" >CBC</text>
<text x="515.20" y="197.60" font-family="Liberation Mono" font-size="11.6" letter-spacing="-0.160" fill="#8000e0" >–33.3</text>
<text x="568.40" y="197.60" font-family="Liberation Mono" font-size="11.6" letter-spacing="-0.160" fill="#8000e0" >–112.2</text>
<text x="622.30" y="197.60" font-family="Liberation Mono" font-size="11.6" letter-spacing="-0.160" fill="#8000e0" >Tropo</text>
<text x="669.20" y="197.60" font-family="Liberation Mono" font-size="11.6" letter-spacing="-0.160" fill="#8000e0" >144.6</text>
<text x="717.20" y="197.60" font-family="Liberation Mono" font-size="11.6" letter-spacing="-0.160" fill="#198391" >169 </text>
<text x="750.00" y="197.60" font-family="Liberation Mono" font-size="11.6" letter-spacing="-0.160" fill="#198391" >(187 )</text>
<ellipse cx="740.15" cy="191.80" rx="1.8" ry="1.6" fill="none" stroke="#198391" stroke-width="0.95"/>
<ellipse cx="779.75" cy="191.80" rx="1.8" ry="1.6" fill="none" stroke="#198391" stroke-width="0.95"/>
<text x="325.70" y="208.76" font-family="Liberation Mono" font-size="11.6" letter-spacing="-0.160" fill="#8000e0" >CKAM–TV</text>
<text x="400.10" y="208.76" font-family="Liberation Mono" font-size="11.6" letter-spacing="-0.160" fill="#8000e0" >12</text>
<text x="484.40" y="208.76" font-family="Liberation Mono" font-size="11.6" letter-spacing="-0.160" fill="#8000e0" ></text>
<text x="515.20" y="208.76" font-family="Liberation Mono" font-size="11.6" letter-spacing="-0.160" fill="#8000e0" >–36.9</text>
<text x="568.40" y="208.76" font-family="Liberation Mono" font-size="11.6" letter-spacing="-0.160" fill="#8000e0" >–115.7</text>
<text x="622.30" y="208.76" font-family="Liberation Mono" font-size="11.6" letter-spacing="-0.160" fill="#8000e0" >Tropo</text>
<text x="669.20" y="208.76" font-family="Liberation Mono" font-size="11.6" letter-spacing="-0.160" fill="#8000e0" >101.8</text>
<text x="730.80" y="208.76" font-family="Liberation Mono" font-size="11.6" letter-spacing="-0.160" fill="#c5270f" >6 </text>
<text x="756.80" y="208.76" font-family="Liberation Mono" font-size="11.6" letter-spacing="-0.160" fill="#c5270f" >(24 )</text>
<ellipse cx="740.15" cy="202.96" rx="1.8" ry="1.6" fill="none" stroke="#c5270f" stroke-width="0.95"/>
<ellipse cx="779.75" cy="202.96" rx="1.8" ry="1.6" fill="none" stroke="#c5270f" stroke-width="0.95"/>
<text x="325.70" y="219.92" font-family="Liberation Mono" font-size="11.6" letter-spacing="-0.160" fill="#8000e0" >CJCH–TV </text>
<polygon points="377.40,211.92 378.08,213.59 379.87,213.72 378.49,214.88 378.93,216.63 377.40,215.67 375.87,216.63 376.31,214.88 374.93,213.72 376.72,213.59" fill="none" stroke="#8000e0" stroke-width="0.75" stroke-linejoin="round"/>
<text x="400.10" y="219.92" font-family="Liberation Mono" font-size="11.6" letter-spacing="-0.160" fill="#8000e0" >10</text>
<text x="474.20" y="219.92" font-family="Liberation Mono" font-size="11.6" letter-spacing="-0.160" fill="#8000e0" >CTV</text>
<text x="515.20" y="219.92" font-family="Liberation Mono" font-size="11.6" letter-spacing="-0.160" fill="#8000e0" >–38.6</text>
<text x="568.40" y="219.92" font-family="Liberation Mono" font-size="11.6" letter-spacing="-0.160" fill="#8000e0" >–117.4</text>
<text x="622.30" y="219.92" font-family="Liberation Mono" font-size="11.6" letter-spacing="-0.160" fill="#8000e0" >Tropo</text>
<text x="669.20" y="219.92" font-family="Liberation Mono" font-size="11.6" letter-spacing="-0.160" fill="#8000e0" >121.7</text>
<text x="717.20" y="219.92" font-family="Liberation Mono" font-size="11.6" letter-spacing="-0.160" fill="#19911e" >116 </text>
<text x="750.00" y="219.92" font-family="Liberation Mono" font-size="11.6" letter-spacing="-0.160" fill="#19911e" >(133 )</text>
<ellipse cx="740.15" cy="214.12" rx="1.8" ry="1.6" fill="none" stroke="#19911e" stroke-width="0.95"/>
<ellipse cx="779.75" cy="214.12" rx="1.8" ry="1.6" fill="none" stroke="#19911e" stroke-width="0.95"/>
<text x="325.70" y="231.09" font-family="Liberation Mono" font-size="11.6" letter-spacing="-0.160" fill="#8000e0" >CKLT–TV </text>
<polygon points="377.40,223.09 378.08,224.76 379.87,224.88 378.49,226.04 378.93,227.79 377.40,226.84 375.87,227.79 376.31,226.04 374.93,224.88 376.72,224.76" fill="none" stroke="#8000e0" stroke-width="0.75" stroke-linejoin="round"/>
<text x="406.90" y="231.09" font-family="Liberation Mono" font-size="11.6" letter-spacing="-0.160" fill="#8000e0" >7</text>
<text x="484.40" y="231.09" font-family="Liberation Mono" font-size="11.6" letter-spacing="-0.160" fill="#8000e0" ></text>
<text x="515.20" y="231.09" font-family="Liberation Mono" font-size="11.6" letter-spacing="-0.160" fill="#8000e0" >–39.1</text>
<text x="568.40" y="231.09" font-family="Liberation Mono" font-size="11.6" letter-spacing="-0.160" fill="#8000e0" >–118.0</text>
<text x="622.30" y="231.09" font-family="Liberation Mono" font-size="11.6" letter-spacing="-0.160" fill="#8000e0" >2Edge</text>
<text x="676.00" y="231.09" font-family="Liberation Mono" font-size="11.6" letter-spacing="-0.160" fill="#8000e0" >33.3</text>
<text x="724.00" y="231.09" font-family="Liberation Mono" font-size="11.6" letter-spacing="-0.160" fill="#c1451e" >16 </text>
<text x="756.80" y="231.09" font-family="Liberation Mono" font-size="11.6" letter-spacing="-0.160" fill="#c1451e" >(33 )</text>
<ellipse cx="740.15" cy="225.29" rx="1.8" ry="1.6" fill="none" stroke="#c1451e" stroke-width="0.95"/>
<ellipse cx="779.75" cy="225.29" rx="1.8" ry="1.6" fill="none" stroke="#c1451e" stroke-width="0.95"/>
<rect x="387.15" y="12.75" width="5.7" height="4" fill="#a4a4a4"/>
<rect x="393.95" y="12.75" width="5.7" height="4" fill="#a4a4a4"/>
<rect x="448.35" y="12.75" width="5.7" height="4" fill="#a4a4a4"/>
<rect x="455.15" y="12.75" width="5.7" height="4" fill="#a4a4a4"/>
<text x="400.20" y="17.60" font-family="Liberation Mono" font-size="11.6" letter-spacing="-0.160" fill="#000" >Channel</text>
<rect x="507.95" y="12.75" width="5.7" height="4" fill="#a4a4a4"/>
<rect x="514.75" y="12.75" width="5.7" height="4" fill="#a4a4a4"/>
<rect x="521.55" y="12.75" width="5.7" height="4" fill="#a4a4a4"/>
<rect x="528.35" y="12.75" width="5.7" height="4" fill="#a4a4a4"/>
<rect x="535.15" y="12.75" width="5.7" height="4" fill="#a4a4a4"/>
<rect x="541.95" y="12.75" width="5.7" height="4" fill="#a4a4a4"/>
<rect x="548.75" y="12.75" width="5.7" height="4" fill="#a4a4a4"/>
<rect x="555.55" y="12.75" width="5.7" height="4" fill="#a4a4a4"/>
<rect x="603.15" y="12.75" width="5.7" height="4" fill="#a4a4a4"/>
<rect x="609.95" y="12.75" width="5.7" height="4" fill="#a4a4a4"/>
<rect x="616.75" y="12.75" width="5.7" height="4" fill="#a4a4a4"/>
<rect x="623.55" y="12.75" width="5.7" height="4" fill="#a4a4a4"/>
<rect x="630.35" y="12.75" width="5.7" height="4" fill="#a4a4a4"/>
<rect x="637.15" y="12.75" width="5.7" height="4" fill="#a4a4a4"/>
<rect x="643.95" y="12.75" width="5.7" height="4" fill="#a4a4a4"/>
<rect x="650.75" y="12.75" width="5.7" height="4" fill="#a4a4a4"/>
<text x="561.80" y="17.60" font-family="Liberation Mono" font-size="11.6" letter-spacing="-0.160" fill="#000" >Signal</text>
<text x="675.60" y="17.60" font-family="Liberation Mono" font-size="11.6" letter-spacing="-0.160" fill="#000" >Dist</text>
<rect x="717.45" y="12.75" width="5.7" height="4" fill="#a4a4a4"/>
<rect x="724.25" y="12.75" width="5.7" height="4" fill="#a4a4a4"/>
<rect x="778.65" y="12.75" width="5.7" height="4" fill="#a4a4a4"/>
<rect x="785.45" y="12.75" width="5.7" height="4" fill="#a4a4a4"/>
<text x="730.50" y="17.60" font-family="Liberation Mono" font-size="11.6" letter-spacing="-0.160" fill="#000" >Azimuth</text>
<text x="325.70" y="28.50" font-family="Liberation Mono" font-size="11.6" letter-spacing="-0.160" fill="#000" >Callsign</text>
<text x="386.90" y="28.50" font-family="Liberation Mono" font-size="11.6" letter-spacing="-0.160" fill="#000" >Real</text>
<text x="420.60" y="28.50" font-family="Liberation Mono" font-size="11.6" letter-spacing="-0.160" fill="#000" >(Virt)</text>
<text x="467.40" y="28.50" font-family="Liberation Mono" font-size="11.6" letter-spacing="-0.160" fill="#000" >Netwk</text>
<text x="514.40" y="28.50" font-family="Liberation Mono" font-size="11.6" letter-spacing="-0.160" fill="#000" >NM(dB)</text>
<text x="561.90" y="28.50" font-family="Liberation Mono" font-size="11.6" letter-spacing="-0.160" fill="#000" >Pwr(dBm)</text>
<text x="628.10" y="28.50" font-family="Liberation Mono" font-size="11.6" letter-spacing="-0.160" fill="#000" >Path</text>
<text x="669.40" y="28.50" font-family="Liberation Mono" font-size="11.6" letter-spacing="-0.160" fill="#000" >miles</text>
<text x="716.90" y="28.50" font-family="Liberation Mono" font-size="11.6" letter-spacing="-0.160" fill="#000" >True (Magn)</text>
<rect x="326" y="29.8" width="465" height="1" fill="#555"/>
<rect x="347" y="237.6" width="6.6" height="11" fill="#c80000"/>
<text x="347.3" y="246.8" font-family="Liberation Sans" font-size="10.5" fill="#fff">c</text>
<text x="361.00" y="248.00" font-family="Liberation Sans" font-size="10.8" fill="#000" text-anchor="start" textLength="7" lengthAdjust="spacingAndGlyphs" >=</text>
<text x="373.00" y="248.00" font-family="Liberation Sans" font-size="12.2" fill="#000" text-anchor="start" textLength="111" lengthAdjust="spacingAndGlyphs" >Co-channel warning</text>
<rect x="557.1" y="238" width="7.1" height="10.6" fill="#ff7878"/>
<text x="557.6" y="247" font-family="Liberation Sans" font-size="10.5" fill="#fff">a</text>
<text x="572.60" y="248.00" font-family="Liberation Sans" font-size="10.8" fill="#000" text-anchor="start" textLength="6.4" lengthAdjust="spacingAndGlyphs" >=</text>
<text x="584.40" y="248.00" font-family="Liberation Sans" font-size="12.2" fill="#000" text-anchor="start" textLength="143.7" lengthAdjust="spacingAndGlyphs" >Adjacent channel warning</text>
<line x1="9" y1="645.50" x2="172.5" y2="645.50" stroke="#888" stroke-width="1" stroke-dasharray="1,1"/>
<line x1="216" y1="645.50" x2="791.5" y2="645.50" stroke="#888" stroke-width="1" stroke-dasharray="1,1"/>
<line x1="9" y1="657.50" x2="172.5" y2="657.50" stroke="#888" stroke-width="1" stroke-dasharray="1,1"/>
<line x1="216" y1="657.50" x2="791.5" y2="657.50" stroke="#888" stroke-width="1" stroke-dasharray="1,1"/>
<line x1="9" y1="670.50" x2="172.5" y2="670.50" stroke="#888" stroke-width="1" stroke-dasharray="1,1"/>
<line x1="216" y1="670.50" x2="791.5" y2="670.50" stroke="#888" stroke-width="1" stroke-dasharray="1,1"/>
<line x1="9" y1="683.50" x2="172.5" y2="683.50" stroke="#888" stroke-width="1" stroke-dasharray="1,1"/>
<line x1="216" y1="683.50" x2="791.5" y2="683.50" stroke="#888" stroke-width="1" stroke-dasharray="1,1"/>
<line x1="9" y1="696.50" x2="172.5" y2="696.50" stroke="#888" stroke-width="1" stroke-dasharray="1,1"/>
<line x1="216" y1="696.50" x2="791.5" y2="696.50" stroke="#888" stroke-width="1" stroke-dasharray="1,1"/>
<line x1="9" y1="708.50" x2="172.5" y2="708.50" stroke="#888" stroke-width="1" stroke-dasharray="1,1"/>
<line x1="216" y1="708.50" x2="791.5" y2="708.50" stroke="#888" stroke-width="1" stroke-dasharray="1,1"/>
<line x1="9" y1="721.50" x2="172.5" y2="721.50" stroke="#888" stroke-width="1" stroke-dasharray="1,1"/>
<line x1="216" y1="721.50" x2="791.5" y2="721.50" stroke="#888" stroke-width="1" stroke-dasharray="1,1"/>
<line x1="9" y1="734.50" x2="172.5" y2="734.50" stroke="#888" stroke-width="1" stroke-dasharray="1,1"/>
<line x1="216" y1="734.50" x2="791.5" y2="734.50" stroke="#888" stroke-width="1" stroke-dasharray="1,1"/>
<line x1="9" y1="747.50" x2="172.5" y2="747.50" stroke="#888" stroke-width="1" stroke-dasharray="1,1"/>
<line x1="216" y1="747.50" x2="791.5" y2="747.50" stroke="#888" stroke-width="1" stroke-dasharray="1,1"/>
<path d="M13,632.5 H7.5 V760 H173.5 V632.5 H163" fill="none" stroke="#000" stroke-width="2"/>
<line x1="64.8" y1="632.5" x2="111" y2="632.5" stroke="#000" stroke-width="2"/>
<path d="M482.2,632.5 H214.5 V760.3 H792.5 V632.5 H524" fill="none" stroke="#000" stroke-width="2"/>
<rect x="39.2" y="631.5" width="9.7" height="128.5" fill="#bcbcbc" fill-opacity="0.34"/>
<rect x="70.2" y="631.5" width="30.7" height="128.5" fill="#bcbcbc" fill-opacity="0.34"/>
<rect x="14" y="622" width="50" height="15.2" fill="#fff"/>
<text x="20.00" y="635.80" font-family="Liberation Sans" font-size="10.2" font-weight="bold" fill="#000" text-anchor="start" textLength="38.5" lengthAdjust="spacingAndGlyphs" >VHF Lo</text>
<text x="119.20" y="635.75" font-family="Liberation Sans" font-size="10.2" font-weight="bold" fill="#000" text-anchor="start" textLength="36" lengthAdjust="spacingAndGlyphs" >VHF Hi</text>
<text x="492.25" y="635.60" font-family="Liberation Sans" font-size="10.2" font-weight="bold" fill="#000" text-anchor="start" textLength="22.4" lengthAdjust="spacingAndGlyphs" >UHF</text>
<text x="182.80" y="635.90" font-family="Liberation Sans" font-size="8.6" fill="#000" text-anchor="start" textLength="22.1" lengthAdjust="spacingAndGlyphs" >dBm</text>
<text x="185.90" y="647.90" font-family="Liberation Sans" font-size="10.0" fill="#000" text-anchor="start" textLength="16.4" lengthAdjust="spacingAndGlyphs" >-10</text>
<text x="185.90" y="660.61" font-family="Liberation Sans" font-size="10.0" fill="#000" text-anchor="start" textLength="16.4" lengthAdjust="spacingAndGlyphs" >-20</text>
<text x="185.90" y="673.32" font-family="Liberation Sans" font-size="10.0" fill="#000" text-anchor="start" textLength="16.4" lengthAdjust="spacingAndGlyphs" >-30</text>
<text x="185.90" y="686.03" font-family="Liberation Sans" font-size="10.0" fill="#000" text-anchor="start" textLength="16.4" lengthAdjust="spacingAndGlyphs" >-40</text>
<text x="185.90" y="698.74" font-family="Liberation Sans" font-size="10.0" fill="#000" text-anchor="start" textLength="16.4" lengthAdjust="spacingAndGlyphs" >-50</text>
<text x="185.90" y="711.45" font-family="Liberation Sans" font-size="10.0" fill="#000" text-anchor="start" textLength="16.4" lengthAdjust="spacingAndGlyphs" >-60</text>
<text x="185.90" y="724.16" font-family="Liberation Sans" font-size="10.0" fill="#000" text-anchor="start" textLength="16.4" lengthAdjust="spacingAndGlyphs" >-70</text>
<text x="185.90" y="736.87" font-family="Liberation Sans" font-size="10.0" fill="#000" text-anchor="start" textLength="16.4" lengthAdjust="spacingAndGlyphs" >-80</text>
<text x="185.90" y="749.58" font-family="Liberation Sans" font-size="10.0" fill="#000" text-anchor="start" textLength="16.4" lengthAdjust="spacingAndGlyphs" >-90</text>
<text x="177.00" y="761.60" font-family="Liberation Sans" font-size="9" fill="#000" text-anchor="start" textLength="33.7" lengthAdjust="spacingAndGlyphs" >Channel</text>
<rect x="9.70" y="756" width="5.20" height="7" fill="#fff"/>
<text x="12.30" y="762.00" font-family="Liberation Sans" font-size="7" fill="#000" text-anchor="middle" >2</text>
<rect x="31.20" y="756" width="5.20" height="7" fill="#fff"/>
<text x="33.80" y="762.00" font-family="Liberation Sans" font-size="7" fill="#000" text-anchor="middle" >4</text>
<rect x="52.60" y="756" width="5.20" height="7" fill="#fff"/>
<text x="55.20" y="762.00" font-family="Liberation Sans" font-size="7" fill="#000" text-anchor="middle" >5</text>
<rect x="62.40" y="756" width="5.20" height="7" fill="#fff"/>
<text x="65.00" y="762.00" font-family="Liberation Sans" font-size="7" fill="#000" text-anchor="middle" >6</text>
<rect x="103.40" y="756" width="5.20" height="7" fill="#fff"/>
<text x="106.00" y="762.00" font-family="Liberation Sans" font-size="7" fill="#000" text-anchor="middle" >7</text>
<rect x="124.40" y="756" width="5.20" height="7" fill="#fff"/>
<text x="127.00" y="762.00" font-family="Liberation Sans" font-size="7" fill="#000" text-anchor="middle" >9</text>
<rect x="143.30" y="756" width="9.40" height="7" fill="#fff"/>
<text x="148.00" y="762.00" font-family="Liberation Sans" font-size="7" fill="#000" text-anchor="middle" >11</text>
<rect x="163.50" y="756" width="9.40" height="7" fill="#fff"/>
<text x="168.20" y="762.00" font-family="Liberation Sans" font-size="7" fill="#000" text-anchor="middle" >13</text>
<rect x="215.30" y="756" width="9.40" height="7" fill="#fff"/>
<text x="220.00" y="762.00" font-family="Liberation Sans" font-size="7" fill="#000" text-anchor="middle" >14</text>
<rect x="235.86" y="756" width="9.40" height="7" fill="#fff"/>
<text x="240.56" y="762.00" font-family="Liberation Sans" font-size="7" fill="#000" text-anchor="middle" >16</text>
<rect x="266.70" y="756" width="9.40" height="7" fill="#fff"/>
<text x="271.40" y="762.00" font-family="Liberation Sans" font-size="7" fill="#000" text-anchor="middle" >19</text>
<rect x="297.54" y="756" width="9.40" height="7" fill="#fff"/>
<text x="302.24" y="762.00" font-family="Liberation Sans" font-size="7" fill="#000" text-anchor="middle" >22</text>
<rect x="328.38" y="756" width="9.40" height="7" fill="#fff"/>
<text x="333.08" y="762.00" font-family="Liberation Sans" font-size="7" fill="#000" text-anchor="middle" >25</text>
<rect x="359.22" y="756" width="9.40" height="7" fill="#fff"/>
<text x="363.92" y="762.00" font-family="Liberation Sans" font-size="7" fill="#000" text-anchor="middle" >28</text>
<rect x="390.06" y="756" width="9.40" height="7" fill="#fff"/>
<text x="394.76" y="762.00" font-family="Liberation Sans" font-size="7" fill="#000" text-anchor="middle" >31</text>
<rect x="420.90" y="756" width="9.40" height="7" fill="#fff"/>
<text x="425.60" y="762.00" font-family="Liberation Sans" font-size="7" fill="#000" text-anchor="middle" >34</text>
<rect x="451.74" y="756" width="9.40" height="7" fill="#fff"/>
<text x="456.44" y="762.00" font-family="Liberation Sans" font-size="7" fill="#000" text-anchor="middle" >37</text>
<rect x="482.58" y="756" width="9.40" height="7" fill="#fff"/>
<text x="487.28" y="762.00" font-family="Liberation Sans" font-size="7" fill="#000" text-anchor="middle" >40</text>
<rect x="513.42" y="756" width="9.40" height="7" fill="#fff"/>
<text x="518.12" y="762.00" font-family="Liberation Sans" font-size="7" fill="#000" text-anchor="middle" >43</text>
<rect x="544.26" y="756" width="9.40" height="7" fill="#fff"/>
<text x="548.96" y="762.00" font-family="Liberation Sans" font-size="7" fill="#000" text-anchor="middle" >46</text>
<rect x="575.10" y="756" width="9.40" height="7" fill="#fff"/>
<text x="579.80" y="762.00" font-family="Liberation Sans" font-size="7" fill="#000" text-anchor="middle" >49</text>
<rect x="605.94" y="756" width="9.40" height="7" fill="#fff"/>
<text x="610.64" y="762.00" font-family="Liberation Sans" font-size="7" fill="#000" text-anchor="middle" >52</text>
<rect x="636.78" y="756" width="9.40" height="7" fill="#fff"/>
<text x="641.48" y="762.00" font-family="Liberation Sans" font-size="7" fill="#000" text-anchor="middle" >55</text>
<rect x="667.62" y="756" width="9.40" height="7" fill="#fff"/>
<text x="672.32" y="762.00" font-family="Liberation Sans" font-size="7" fill="#000" text-anchor="middle" >58</text>
<rect x="698.46" y="756" width="9.40" height="7" fill="#fff"/>
<text x="703.16" y="762.00" font-family="Liberation Sans" font-size="7" fill="#000" text-anchor="middle" >61</text>
<rect x="729.30" y="756" width="9.40" height="7" fill="#fff"/>
<text x="734.00" y="762.00" font-family="Liberation Sans" font-size="7" fill="#000" text-anchor="middle" >64</text>
<rect x="760.14" y="756" width="9.40" height="7" fill="#fff"/>
<text x="764.84" y="762.00" font-family="Liberation Sans" font-size="7" fill="#000" text-anchor="middle" >67</text>
<rect x="780.70" y="756" width="9.40" height="7" fill="#fff"/>
<text x="785.40" y="762.00" font-family="Liberation Sans" font-size="7" fill="#000" text-anchor="middle" >69</text>
<rect x="266.00" y="673.60" width="10.10" height="3.2" rx="1.5" fill="#6a00cc"/>
<rect x="48.00" y="712.40" width="11.90" height="6.2" rx="3.1" fill="#ffff00"/>
<rect x="49.40" y="713.80" width="9.10" height="3.4" rx="0.8" fill="#6a00cc"/>
<rect x="8.20" y="739.20" width="10.30" height="6.2" rx="3.1" fill="#f4f488"/>
<rect x="9.60" y="740.60" width="7.50" height="3.4" rx="0.8" fill="#b070e0"/>
<rect x="18.30" y="743.40" width="10.70" height="6.2" rx="3.1" fill="#f4f488"/>
<rect x="19.70" y="744.80" width="7.90" height="3.4" rx="0.8" fill="#b070e0"/>
<rect x="58.20" y="750.50" width="12.70" height="6.2" rx="3.1" fill="#f4f488"/>
<rect x="59.60" y="751.90" width="9.90" height="3.4" rx="0.8" fill="#b070e0"/>
<rect x="265.80" y="624.00" width="9.50" height="45.40" fill="#fff"/>
<text transform="translate(274.50,669.20) rotate(-90)" x="0" y="0" font-family="Liberation Mono" font-size="11.38" fill="#8000e0" textLength="45.00" lengthAdjust="spacingAndGlyphs">CBAFT–10</text>
<text transform="translate(58.20,710.10) rotate(-90)" x="0" y="0" font-family="Liberation Mono" font-size="10.47" fill="#6a00cc" textLength="39.90" lengthAdjust="spacingAndGlyphs">CBAFT–1</text>
<text transform="translate(16.40,736.50) rotate(-90)" x="0" y="0" font-family="Liberation Mono" font-size="10.32" fill="#b070e0" textLength="42.50" lengthAdjust="spacingAndGlyphs">CKCW–TV</text>
<text transform="translate(26.90,741.20) rotate(-90)" x="0" y="0" font-family="Liberation Mono" font-size="10.62" fill="#b070e0" textLength="50.50" lengthAdjust="spacingAndGlyphs">CKLT–TV–1</text>
<text transform="translate(68.40,747.50) rotate(-90)" x="0" y="0" font-family="Liberation Mono" font-size="10.62" fill="#b070e0" textLength="51.90" lengthAdjust="spacingAndGlyphs">CBAT–TV–1</text>
</svg></body></html>
